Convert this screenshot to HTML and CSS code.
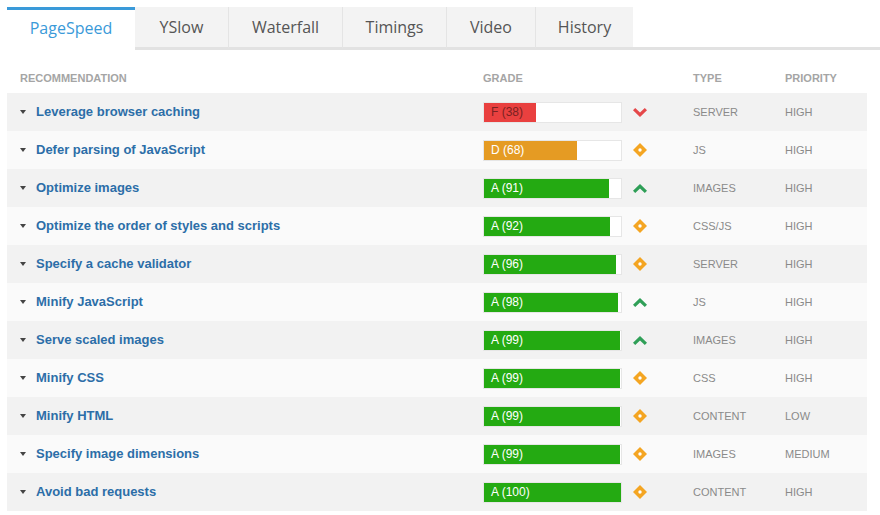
FILE: index.html
```html
<!DOCTYPE html>
<html lang="en">

<head>
  <meta charset="UTF-8">
  <title>PageSpeed Report</title>
  <link rel="stylesheet" href="styles.css">
</head>

<body>
  <div class="report">
    <ul class="tabs">
      <li class="tab active">PageSpeed</li>
      <li class="tab">YSlow</li>
      <li class="tab">Waterfall</li>
      <li class="tab">Timings</li>
      <li class="tab">Video</li>
      <li class="tab">History</li>
    </ul>

    <div class="row head">
      <div>Recommendation</div>
      <div>Grade</div>
      <div>Type</div>
      <div>Priority</div>
    </div>

    <div class="row">
      <div class="rec"><span class="caret"></span>Leverage browser caching</div>
      <div class="grade">
        <div class="bar"><div class="fill f" style="width:38%">F (38)</div></div>
        <svg class="icon" width="14" height="9" viewBox="0 0 14 9"><path d="M0 2.2 L2.2 0 L7 4.6 L11.8 0 L14 2.2 L7 9 Z" fill="#e5484a"/></svg>
      </div>
      <div class="type">Server</div>
      <div class="prio">High</div>
    </div>

    <div class="row">
      <div class="rec"><span class="caret"></span>Defer parsing of JavaScript</div>
      <div class="grade">
        <div class="bar"><div class="fill d" style="width:68%">D (68)</div></div>
        <svg class="icon" width="14" height="14" viewBox="0 0 14 14"><path d="M7 0 L14 7 L7 14 L0 7 Z" fill="#f4a522"/><circle cx="7" cy="7" r="1.7" fill="#fff"/></svg>
      </div>
      <div class="type">JS</div>
      <div class="prio">High</div>
    </div>

    <div class="row">
      <div class="rec"><span class="caret"></span>Optimize images</div>
      <div class="grade">
        <div class="bar"><div class="fill a" style="width:91%">A (91)</div></div>
        <svg class="icon" width="14" height="9" viewBox="0 0 14 9"><path d="M0 6.8 L2.2 9 L7 4.4 L11.8 9 L14 6.8 L7 0 Z" fill="#2f9f57"/></svg>
      </div>
      <div class="type">Images</div>
      <div class="prio">High</div>
    </div>

    <div class="row">
      <div class="rec"><span class="caret"></span>Optimize the order of styles and scripts</div>
      <div class="grade">
        <div class="bar"><div class="fill a" style="width:92%">A (92)</div></div>
        <svg class="icon" width="14" height="14" viewBox="0 0 14 14"><path d="M7 0 L14 7 L7 14 L0 7 Z" fill="#f4a522"/><circle cx="7" cy="7" r="1.7" fill="#fff"/></svg>
      </div>
      <div class="type">CSS/JS</div>
      <div class="prio">High</div>
    </div>

    <div class="row">
      <div class="rec"><span class="caret"></span>Specify a cache validator</div>
      <div class="grade">
        <div class="bar"><div class="fill a" style="width:96%">A (96)</div></div>
        <svg class="icon" width="14" height="14" viewBox="0 0 14 14"><path d="M7 0 L14 7 L7 14 L0 7 Z" fill="#f4a522"/><circle cx="7" cy="7" r="1.7" fill="#fff"/></svg>
      </div>
      <div class="type">Server</div>
      <div class="prio">High</div>
    </div>

    <div class="row">
      <div class="rec"><span class="caret"></span>Minify JavaScript</div>
      <div class="grade">
        <div class="bar"><div class="fill a" style="width:98%">A (98)</div></div>
        <svg class="icon" width="14" height="9" viewBox="0 0 14 9"><path d="M0 6.8 L2.2 9 L7 4.4 L11.8 9 L14 6.8 L7 0 Z" fill="#2f9f57"/></svg>
      </div>
      <div class="type">JS</div>
      <div class="prio">High</div>
    </div>

    <div class="row">
      <div class="rec"><span class="caret"></span>Serve scaled images</div>
      <div class="grade">
        <div class="bar"><div class="fill a" style="width:99%">A (99)</div></div>
        <svg class="icon" width="14" height="9" viewBox="0 0 14 9"><path d="M0 6.8 L2.2 9 L7 4.4 L11.8 9 L14 6.8 L7 0 Z" fill="#2f9f57"/></svg>
      </div>
      <div class="type">Images</div>
      <div class="prio">High</div>
    </div>

    <div class="row">
      <div class="rec"><span class="caret"></span>Minify CSS</div>
      <div class="grade">
        <div class="bar"><div class="fill a" style="width:99%">A (99)</div></div>
        <svg class="icon" width="14" height="14" viewBox="0 0 14 14"><path d="M7 0 L14 7 L7 14 L0 7 Z" fill="#f4a522"/><circle cx="7" cy="7" r="1.7" fill="#fff"/></svg>
      </div>
      <div class="type">CSS</div>
      <div class="prio">High</div>
    </div>

    <div class="row">
      <div class="rec"><span class="caret"></span>Minify HTML</div>
      <div class="grade">
        <div class="bar"><div class="fill a" style="width:99%">A (99)</div></div>
        <svg class="icon" width="14" height="14" viewBox="0 0 14 14"><path d="M7 0 L14 7 L7 14 L0 7 Z" fill="#f4a522"/><circle cx="7" cy="7" r="1.7" fill="#fff"/></svg>
      </div>
      <div class="type">Content</div>
      <div class="prio">Low</div>
    </div>

    <div class="row">
      <div class="rec"><span class="caret"></span>Specify image dimensions</div>
      <div class="grade">
        <div class="bar"><div class="fill a" style="width:99%">A (99)</div></div>
        <svg class="icon" width="14" height="14" viewBox="0 0 14 14"><path d="M7 0 L14 7 L7 14 L0 7 Z" fill="#f4a522"/><circle cx="7" cy="7" r="1.7" fill="#fff"/></svg>
      </div>
      <div class="type">Images</div>
      <div class="prio">Medium</div>
    </div>

    <div class="row">
      <div class="rec"><span class="caret"></span>Avoid bad requests</div>
      <div class="grade">
        <div class="bar"><div class="fill a" style="width:100%">A (100)</div></div>
        <svg class="icon" width="14" height="14" viewBox="0 0 14 14"><path d="M7 0 L14 7 L7 14 L0 7 Z" fill="#f4a522"/><circle cx="7" cy="7" r="1.7" fill="#fff"/></svg>
      </div>
      <div class="type">Content</div>
      <div class="prio">High</div>
    </div>
  </div>
</body>

</html>
```

FILE: styles.css
```css
body {
  margin: 0;
  font-family: "Liberation Sans", Arial, sans-serif;
  background: #fff;
}

.report {
  padding: 7px 0 0 7px;
}

.tabs {
  display: flex;
  list-style: none;
  margin: 0 -7px 0 0;
  padding: 0;
  border-bottom: 3px solid #e2e2e2;
}

.tab {
  box-sizing: border-box;
  height: 43px;
  line-height: 40px;
  text-align: center;
  background: #f3f3f3;
  color: #555;
  font-family: "Open Sans", sans-serif;
  font-size: 16px;
  border-left: 1px solid #e4e4e4;
  border-bottom: 3px solid #e2e2e2;
  margin-bottom: -3px;
}

/* tab widths as on the live report */
.tab:nth-child(1) { width: 128px; }
.tab:nth-child(2) { width: 93px; border-left: none; }
.tab:nth-child(3) { width: 114px; }
.tab:nth-child(4) { width: 104px; }
.tab:nth-child(5) { width: 89px; }
.tab:nth-child(6) { width: 98px; }

.tab.active {
  background: #fff;
  color: #3a9ad9;
  border-left: none;
  border-top: 3px solid #3a9ad9;
  border-bottom: 3px solid #fff;
  line-height: 37px;
}

.row {
  display: grid;
  grid-template-columns: 463px 210px 92px 1fr;
  align-items: center;
  width: 860px;
  height: 38px;
  padding-left: 13px;
  box-sizing: border-box;
  background: #fafafa;
}

.row:nth-child(odd) {
  background: #f2f2f2;
}

.row.head {
  background: #fff;
  height: 43px;
  padding-top: 13px;
  font-size: 11px;
  font-weight: bold;
  color: #a5a5a5;
  text-transform: uppercase;
}

.rec {
  display: flex;
  align-items: center;
  font-size: 13px;
  font-weight: bold;
  color: #2c6ea8;
  padding-bottom: 1px;
}

.caret {
  width: 0;
  height: 0;
  border-left: 3px solid transparent;
  border-right: 3px solid transparent;
  border-top: 4px solid #444;
  margin-right: 10px;
}

.grade {
  display: flex;
  align-items: center;
}

.bar {
  width: 139px;
  height: 21px;
  box-sizing: border-box;
  border: 1px solid #e6e6e6;
  background: #fff;
}

.fill {
  height: 19px;
  line-height: 19px;
  padding-left: 7px;
  box-sizing: border-box;
  font-size: 12px;
  color: #fff;
  white-space: nowrap;
}

.fill.f {
  background: #e9403f;
  color: #7a2222;
}

.fill.d {
  background: #e59b23;
}

.fill.a {
  background: #24aa12;
}

.icon {
  margin-left: 11px;
}

.type,
.prio {
  font-size: 11px;
  color: #8a8a8a;
  text-transform: uppercase;
  padding-bottom: 1px;
}
```
